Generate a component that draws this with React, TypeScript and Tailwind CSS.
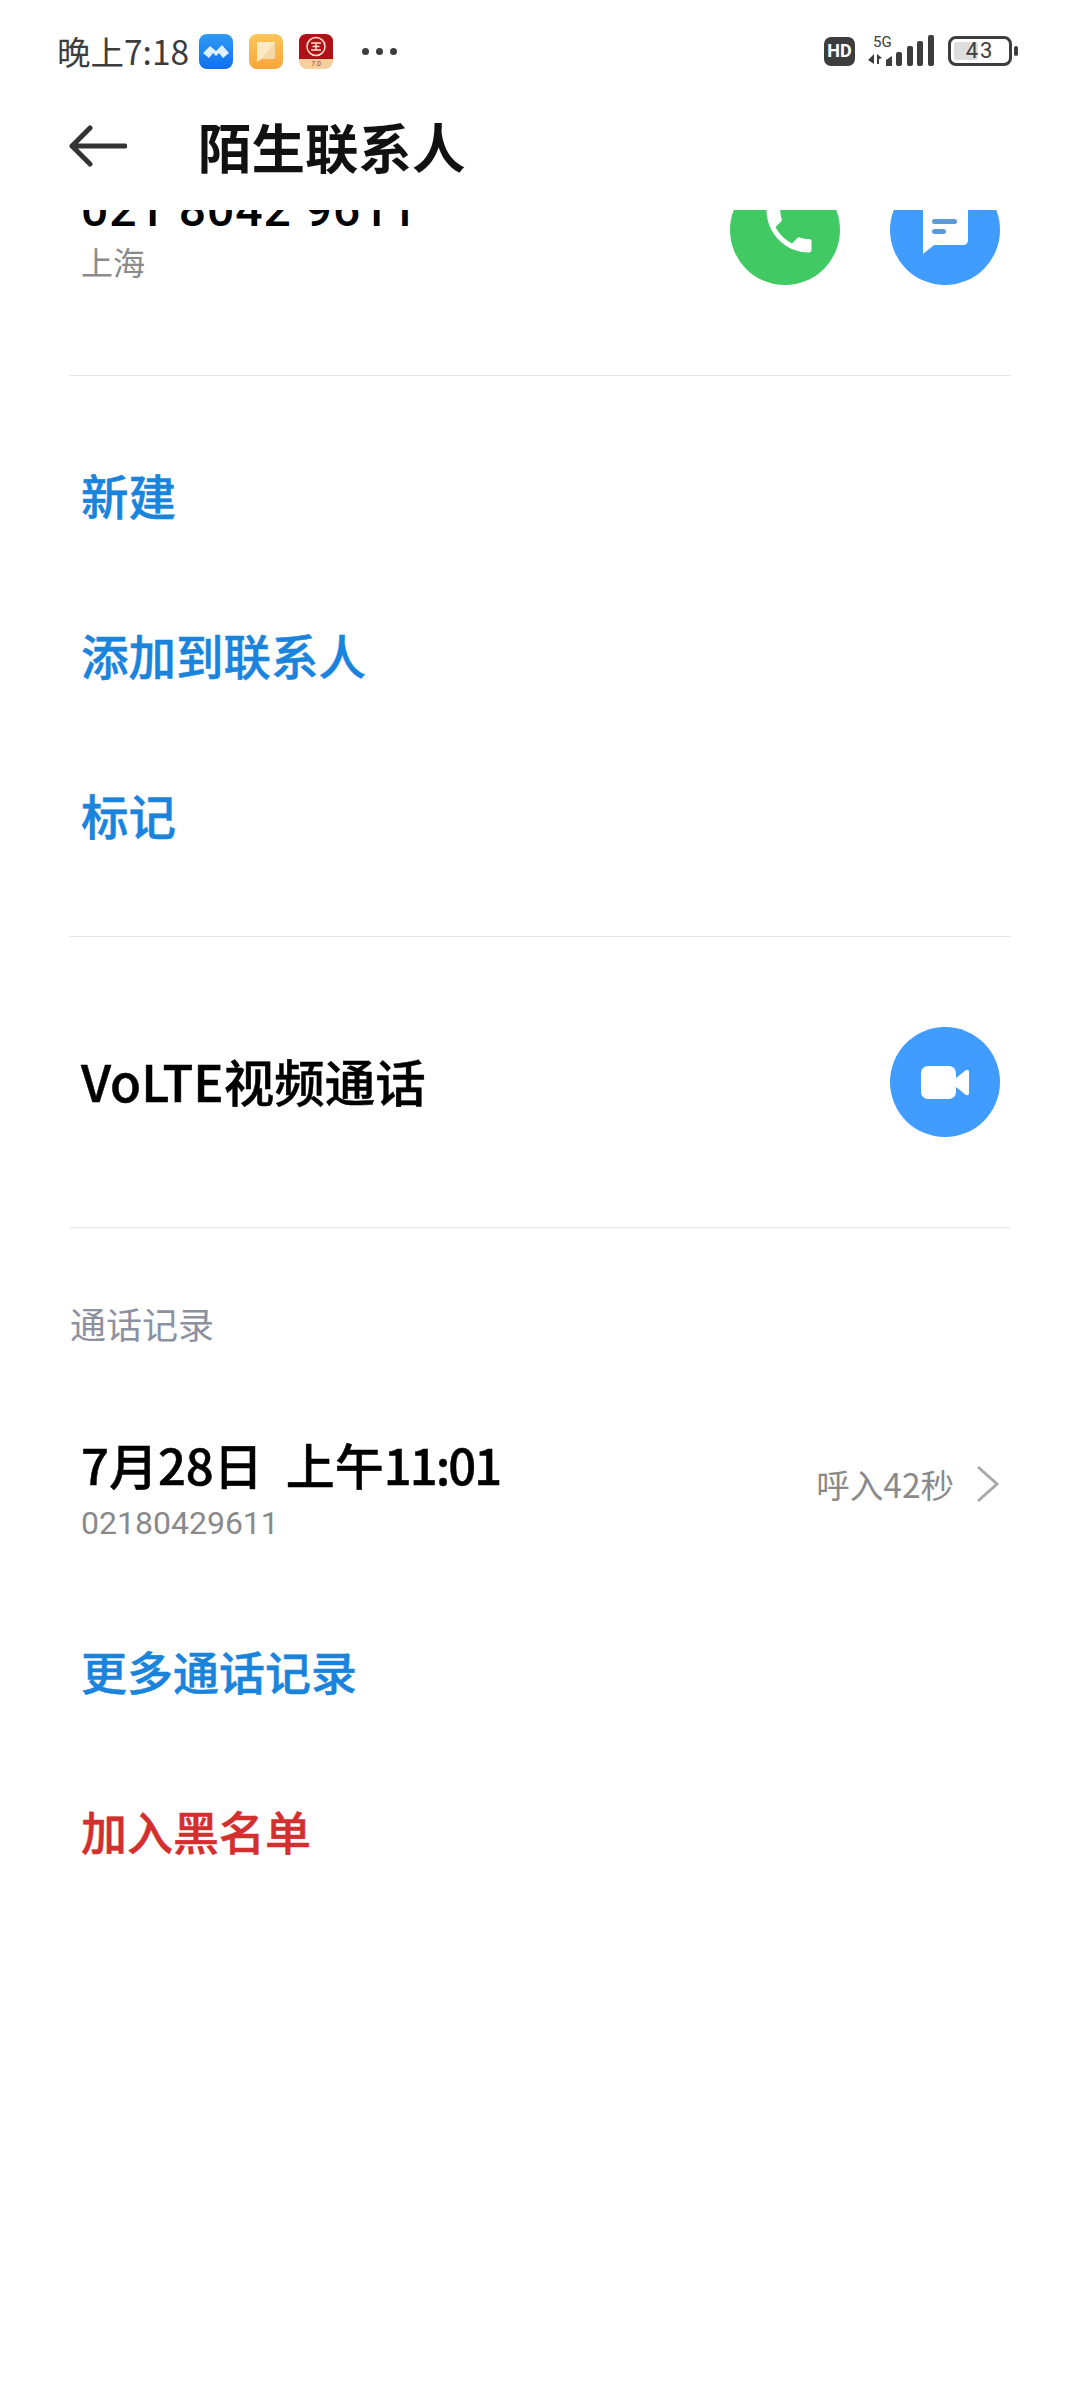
function AppIcons() {
  return (
    <div className="flex items-center gap-[16px] ml-[10px]">
      {/* meeting app */}
      <svg width="34" height="35" viewBox="0 0 34 35">
        <defs>
          <linearGradient id="blueApp" x1="0" y1="0" x2="0" y2="1">
            <stop offset="0" stopColor="#2f9bf5" />
            <stop offset="1" stopColor="#0f6ff0" />
          </linearGradient>
        </defs>
        <rect width="34" height="35" rx="8" fill="url(#blueApp)" />
        <path d="M4 19 L11 12 L17 17 L23 11 L30 19 L24 24 L20 19 L17 22 L14 19 L10 24 Z" fill="#dff0ff" />
      </svg>
      {/* notes app */}
      <svg width="34" height="35" viewBox="0 0 34 35">
        <defs>
          <linearGradient id="noteApp" x1="0" y1="0" x2="0" y2="1">
            <stop offset="0" stopColor="#fbc65a" />
            <stop offset="1" stopColor="#f8a63c" />
          </linearGradient>
        </defs>
        <rect width="34" height="35" rx="8" fill="url(#noteApp)" />
        <path d="M9 8 H26 V23 Q26 25 24 25 H12 L8 28 V9 Q8 8 9 8 Z" fill="#fde9c4" />
        <path d="M26 8 V23 Q26 25 24 25 H12 Z" fill="#f4d9a8" />
      </svg>
      {/* bank app */}
      <svg width="34" height="35" viewBox="0 0 34 35">
        <rect width="34" height="35" rx="8" fill="#f6cf9c" />
        <path d="M0 8 Q0 0 8 0 H26 Q34 0 34 8 V25 H0 Z" fill="#ae1216" />
        <circle cx="17" cy="12.5" r="9" fill="none" stroke="#f7e2d0" strokeWidth="1.5" />
        <path d="M12 9 H22 M12 16 H22 M17 9 V16 M13.5 12.5 H20.5" stroke="#f7e2d0" strokeWidth="1.4" />
        <text x="17" y="32" textAnchor="middle" fontSize="7" fill="#a5452a" fontFamily="Roboto, sans-serif">7.0</text>
      </svg>
    </div>
  );
}

function StatusRight() {
  return (
    <div className="flex items-center">
      <div className="w-[31px] h-[29px] rounded-[7px] bg-[#3d3d3d] flex items-center justify-center text-white text-[18px] leading-none font-bold font-['Roboto',sans-serif]">
        HD
      </div>
      <svg width="68" height="34" viewBox="0 0 68 34" className="ml-[12px] -mt-[2px]">
        <text x="6" y="14" fontSize="15" fill="#3d3d3d" fontFamily="Roboto, sans-serif">5G</text>
        <path d="M7 21 V31 L1 27 Z M10 21 L15 25 L12 26 V31 H10 Z" fill="#3d3d3d" />
        <path d="M19 27 L25 23 V33 H19 Z" fill="#3d3d3d" />
        <rect x="29" y="19" width="6" height="14" rx="2" fill="#3d3d3d" />
        <rect x="40" y="13" width="6" height="20" rx="2" fill="#3d3d3d" />
        <rect x="50" y="8" width="6" height="25" rx="2" fill="#3d3d3d" />
        <rect x="61" y="2" width="6" height="31" rx="2" fill="#3d3d3d" />
      </svg>
      {/* battery */}
      <div className="relative ml-[13px] w-[64px] h-[30px] rounded-[8px] border-[3.5px] border-[#3d3d3d] flex items-center justify-center">
        <div className="absolute left-[3px] top-[3px] bottom-[3px] w-[24px] bg-[#dedede] rounded-[2px]" />
        <span className="relative text-[22px] leading-none tracking-[2px] text-[#3d3d3d] font-['Roboto',sans-serif]">43</span>
      </div>
      <div className="ml-[2px] w-[4px] h-[10px] rounded-[2px] bg-[#3d3d3d]" />
    </div>
  );
}

function ActionButton({ color, children }: { color: string; children: React.ReactNode }) {
  return (
    <div className={`w-[110px] h-[110px] rounded-full flex items-center justify-center ${color}`}>
      {children}
    </div>
  );
}

function LinkRow({ label, size = "text-[47.5px]", color = "text-[#1a84dc]" }: { label: string; size?: string; color?: string }) {
  return (
    <div className={`h-[160px] flex items-center pl-[81px] font-medium [-webkit-text-stroke:0.5px_currentColor] ${size} ${color}`}>
      {label}
    </div>
  );
}

export default function App() {
  return (
    <div className="w-[1080px] h-[2400px] bg-white overflow-hidden flex flex-col font-['Noto_Sans_CJK_SC',sans-serif]">
      {/* status bar */}
      <div className="h-[102px] shrink-0 flex items-center justify-between pl-[57px] pr-[62px]">
        <div className="flex items-center">
          <span className="text-[33.5px] leading-none text-[#3d3d3d]">晚上7:18</span>
          <AppIcons />
          <div className="flex gap-[7px] ml-[29px]">
            <span className="w-[7px] h-[7px] rounded-full bg-[#3d3d3d]" />
            <span className="w-[7px] h-[7px] rounded-full bg-[#3d3d3d]" />
            <span className="w-[7px] h-[7px] rounded-full bg-[#3d3d3d]" />
          </div>
        </div>
        <StatusRight />
      </div>

      {/* title bar */}
      <div className="h-[108px] shrink-0 flex items-center pl-[69px] pb-[20px]">
        <svg width="58" height="42" viewBox="0 0 58 42" fill="none" stroke="#333333" strokeWidth="5" strokeLinecap="round" strokeLinejoin="round">
          <path d="M56 21 H3 M21 3 L3 21 L21 39" />
        </svg>
        <h1 className="ml-[71px] text-[53.5px] leading-none font-bold text-[#111111]">陌生联系人</h1>
      </div>

      {/* scrolled content */}
      <div className="flex-1 overflow-hidden">
        <div className="-mt-[35px] ml-[81px] mr-[80px] h-[200px] flex items-start justify-between">
          <div className="pt-[8px]">
            <div className="text-[48px] leading-[54px] font-medium tracking-[1px] text-black font-['Roboto',sans-serif]">021 8042 9611</div>
            <div className="mt-[4px] text-[32px] leading-[40px] text-[#8a8a8a]">上海</div>
          </div>
          <div className="flex gap-[50px]">
            <ActionButton color="bg-[#41c963]">
              <svg width="60" height="60" viewBox="0 0 24 24" fill="white" className="ml-[8px]">
                <path d="M6.6 10.8c1.4 2.8 3.8 5.1 6.6 6.6l2.2-2.2c.3-.3.7-.4 1-.2 1.1.4 2.3.6 3.6.6.6 0 1 .4 1 1V20c0 .6-.4 1-1 1C10.6 21 3 13.4 3 4c0-.6.4-1 1-1h3.5c.6 0 1 .4 1 1 0 1.3.2 2.5.6 3.6.1.3 0 .7-.2 1z" />
              </svg>
            </ActionButton>
            <ActionButton color="bg-[#409cff]">
              <svg width="46" height="48" viewBox="0 0 46 48">
                <path d="M5 0 H41 Q46 0 46 5 V34 Q46 39 41 39 H12 L1 48 V4 Q1 0 5 0 Z" fill="white" />
                <rect x="10" y="13" width="25" height="5" rx="2.5" fill="#5a9ad8" />
                <rect x="10" y="23" width="14" height="5" rx="2.5" fill="#5a9ad8" />
              </svg>
            </ActionButton>
          </div>
        </div>

        <div className="mx-[69px] h-[1px] bg-[#e6e6e6]" />
        <div className="pt-[39px] pb-[41px]">
          <LinkRow label="新建" />
          <LinkRow label="添加到联系人" />
          <LinkRow label="标记" />
        </div>
        <div className="mx-[69px] h-[1px] bg-[#e6e6e6]" />

        <div className="h-[290px] flex items-center justify-between pl-[81px] pr-[80px]">
          <span className="text-[50.5px] font-medium [-webkit-text-stroke:0.5px_currentColor] text-black -mt-[2px]">VoLTE视频通话</span>
          <ActionButton color="bg-[#409cff]">
            <svg width="48" height="33" viewBox="0 0 48 33">
              <rect x="0" y="0" width="35" height="33" rx="7" fill="white" />
              <path d="M35 12 L45 4 Q48 3 48 6 V27 Q48 30 45 29 L35 21 Z" fill="white" />
            </svg>
          </ActionButton>
        </div>
        <div className="mx-[69px] h-[1px] bg-[#e6e6e6]" />

        <div className="mt-[70px] pl-[70px] text-[36px] leading-[50px] text-[#8c91a0]">通话记录</div>

        <div className="mt-[69px] h-[134px] flex items-center justify-between pl-[81px] pr-[80px]">
          <div className="mt-[1px]">
            <div className="text-[49px] leading-[70px] font-medium [-webkit-text-stroke:0.5px_currentColor] text-black [word-spacing:12px]">
              7月28日 上午<span className="tracking-[-2px]">11:01</span>
            </div>
            <div className="-mb-[3px] mt-[3px] text-[32px] leading-[42px] text-[#8a8a8a] font-['Roboto',sans-serif]">02180429611</div>
          </div>
          <div className="flex items-center">
            <span className="text-[33.5px] text-[#8a8a8a]">呼入42秒</span>
            <svg width="24" height="38" viewBox="0 0 24 38" fill="none" stroke="#a8a8a8" strokeWidth="3" className="ml-[22px]">
              <path d="M2 2 L21 19 L2 36" />
            </svg>
          </div>
        </div>

        <div className="mt-[39px]">
          <LinkRow label="更多通话记录" size="text-[46px]" />
          <LinkRow label="加入黑名单" size="text-[46px]" color="text-[#d22f2f]" />
        </div>
      </div>
    </div>
  );
}
